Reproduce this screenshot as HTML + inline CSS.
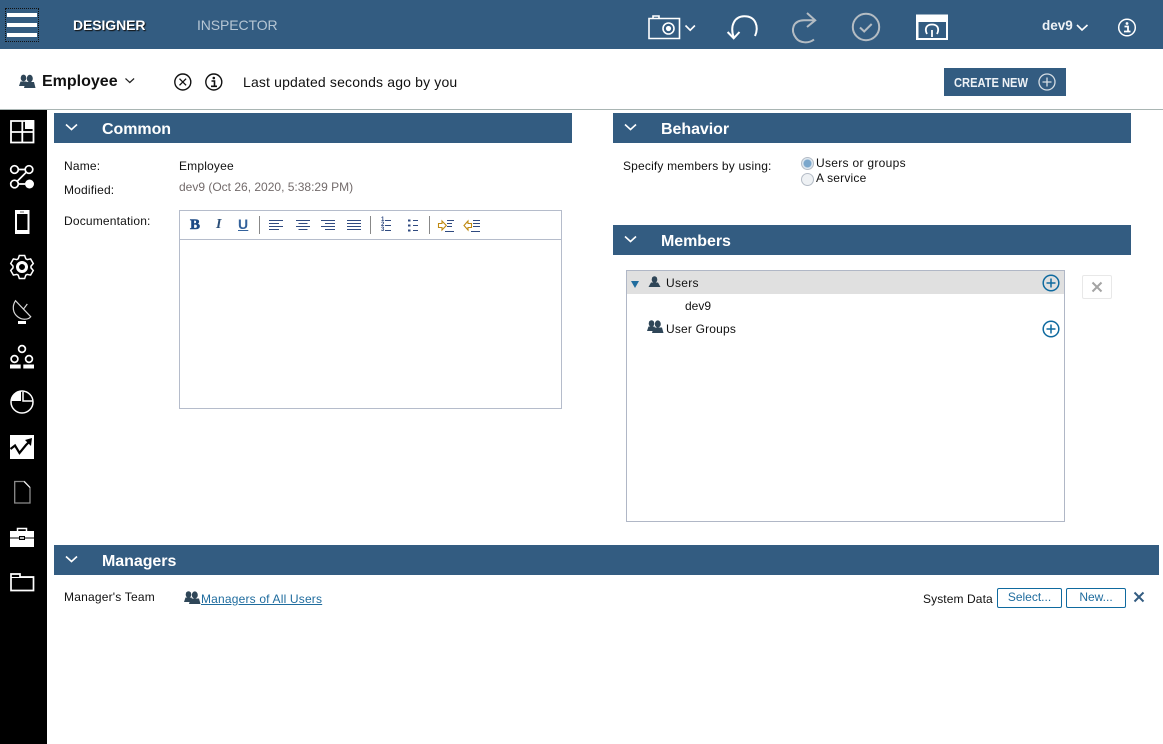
<!DOCTYPE html>
<html><head><meta charset="utf-8">
<style>
html,body{margin:0;padding:0;background:#fff}
body{width:1163px;height:744px;position:relative;overflow:hidden;font-family:"Liberation Sans",sans-serif;font-size:12px;color:#111}
.a{position:absolute}
.t{position:absolute;white-space:nowrap;line-height:16px;letter-spacing:.18px}
.bar{position:absolute;background:#335c81;height:30px}
.bar b{position:absolute;left:48px;top:7px;font-size:16px;line-height:19px;color:#fff;white-space:nowrap;letter-spacing:-.05px}
.bar svg{position:absolute;left:11px;top:10px}
svg{position:absolute;overflow:visible}
.btn{position:absolute;box-sizing:border-box;border:1px solid #0f6a9f;border-radius:2px;height:20px;color:#1f6c9e;text-align:center;line-height:17px;background:#fff}
</style></head><body>

<div class="a" style="left:0;top:0;width:1163px;height:49px;background:#335c81"></div>
<div class="a" style="left:5px;top:8px;width:34px;height:34px;border:1px dotted #111;box-sizing:border-box"></div>
<div class="a" style="left:7px;top:13px;width:30px;height:4px;background:#fff"></div>
<div class="a" style="left:7px;top:23px;width:30px;height:4px;background:#fff"></div>
<div class="a" style="left:7px;top:33px;width:30px;height:4px;background:#fff"></div>
<div class="t" style="left:73px;top:17px;font-size:14px;font-weight:bold;color:#fff;text-shadow:1px 1px 1px #111;letter-spacing:-.1px">DESIGNER</div>
<div class="t" style="left:197px;top:17px;font-size:14px;color:#b6c6d4;letter-spacing:-.1px">INSPECTOR</div>

<svg style="left:0;top:0" width="1163" height="49" fill="none">
<g stroke="#fff" stroke-width="1.6">
<path d="M649 18.500H679.500V38.500H649Z"/><path d="M653 18V16H659V18"/>
<circle cx="668.500" cy="28.500" r="5.500"/><circle cx="668.500" cy="28.500" r="1.800" fill="#fff"/>
<path d="M685.500 25.500l4.700 4.700 4.700-4.700"/>
</g>
<g stroke="#fff" stroke-width="2">
<path d="M755 36C759 27 756 16 744 16.300C735 16.500 729.500 25 733.700 37.500"/>
<path d="M727.600 32L733.700 38.300L739.500 32"/>
</g>
<g stroke="#b4bcc3" stroke-width="2">
<path d="M814 39.500C809 43.500 800 43.500 796 38C790 30 793 20.500 804 20.300L815 20.300"/>
<path d="M807 13L815.200 20.300L807 27"/>
<circle cx="866" cy="27" r="13.200"/>
<path d="M860 27.500l4.200 4 7.500-7.500"/>
</g>
<path d="M916 14.500H948V40H916Z" fill="#fff"/>
<path d="M918.500 22H946V38H918.500Z" fill="#335c81"/>
<path d="M927 34C924 28 927 24.500 932 24.500C937 24.500 940 28 937 34" stroke="#fff" stroke-width="1.800"/>
<path d="M932 30V37" stroke="#fff" stroke-width="1.800"/>
<path d="M1077 25l5 5 5.500-5" stroke="#fff" stroke-width="1.600"/>
<circle cx="1127" cy="27.500" r="8.300" stroke="#fff" stroke-width="1.500"/>
<circle cx="1127" cy="23.500" r="1.400" fill="#fff"/>
<path d="M1124.500 26.500H1128V31.500M1124 31.500H1130.500" stroke="#fff" stroke-width="1.800"/>
</svg>
<div class="t" style="left:1042px;top:18px;font-size:13.500px;font-weight:bold;color:#eef2f6;letter-spacing:0">dev9</div>

<svg style="left:18px;top:74px" width="18" height="14"><g fill="#2f4658"><ellipse cx="5.500" cy="4" rx="2.800" ry="3.400"/><path d="M1 12L2.500 7.500H8.500L10 12Z"/><ellipse cx="11.800" cy="4.500" rx="3" ry="3.800"/><path d="M6 14L7.500 8H16L17.500 14Z"/></g></svg>
<div class="t" style="left:42px;top:72px;font-size:16px;line-height:19px;font-weight:bold;color:#111;letter-spacing:0">Employee</div>
<svg style="left:125px;top:78px" width="10" height="6" fill="none"><path d="M0.500 0.500l4.300 4 4.300-4" stroke="#222" stroke-width="1.200"/></svg>
<svg style="left:174px;top:73px" width="18" height="18" fill="none" stroke="#111"><circle cx="8.800" cy="9" r="8" stroke-width="1.400"/><path d="M5.500 5.700l6.600 6.600M12.100 5.700l-6.600 6.600" stroke-width="1.300"/></svg>
<svg style="left:205px;top:73px" width="18" height="18" fill="none" stroke="#111"><circle cx="8.800" cy="9" r="8" stroke-width="1.400"/><circle cx="8.800" cy="5" r="1.300" fill="#111" stroke="none"/><path d="M6.500 8H9.500V13M6 13.300H12" stroke-width="1.600"/></svg>
<div class="t" style="left:243px;top:74px;font-size:14px;letter-spacing:.16px">Last updated seconds ago by you</div>

<div class="a" style="left:944px;top:68px;width:122px;height:28px;background:#335c81"></div>
<div class="t" style="left:954px;top:75px;font-size:12.500px;font-weight:bold;color:#eef2f6;transform:scaleX(.89);transform-origin:0 0;letter-spacing:0">CREATE NEW</div>
<svg style="left:1038px;top:73px" width="18" height="18" fill="none" stroke="#d5dde4"><circle cx="9" cy="9" r="8" stroke-width="1.300"/><path d="M4.500 9H13.500M9 4.500V13.500" stroke-width="1.300"/></svg>
<div class="a" style="left:0;top:109px;width:1163px;height:1px;background:#a9b5b3"></div>

<div class="a" style="left:0;top:110px;width:47px;height:634px;background:#000"></div>
<svg style="left:0;top:110px" width="47" height="500" fill="none">
<g transform="translate(0,-110)">
<g stroke="#fff" stroke-width="1.800">
<path d="M11 121H33.500V142.500H11ZM22.300 121V142.500M11 132H33.500"/>
</g>
<rect x="25" y="120" width="9" height="9" fill="#fff"/>
<g stroke="#fff" stroke-width="1.700">
<circle cx="14.500" cy="169.500" r="3.800"/><circle cx="29" cy="169.500" r="3.800"/><circle cx="14.500" cy="184" r="3.800"/>
<path d="M18.300 169.500H25.200M18.300 184H25.200M17 181.500L26.500 172"/>
</g>
<circle cx="29.500" cy="184" r="4.500" fill="#fff"/>
<rect x="15" y="210" width="14.500" height="24" fill="#fff"/>
<rect x="17" y="214" width="10.500" height="16" fill="#000"/>
<rect x="20" y="211.500" width="4" height="1" fill="#666"/>
<path d="M19.350 255.500L24.650 255.500 25.800 258.800 27.160 259.600 30.630 258.950 33.280 263.550 30.970 266.200V267.800L33.280 270.450 30.630 275.050 27.160 274.400 25.800 275.160 24.650 278.500H19.350L18.200 275.160 16.840 274.400 13.370 275.050 10.720 270.450 13.030 267.800V266.200L10.720 263.550 13.370 258.950 16.840 259.600 18.200 258.800Z" stroke="#fff" stroke-width="1.500"/>
<circle cx="22" cy="267" r="4.500" stroke="#fff" stroke-width="3"/>
<g stroke="#d8d8d8" stroke-width="1.200">
<path d="M15.500 300.700C12 306 12.500 313 18 317C22 320 28 320 30.700 316.700Z"/>
<path d="M23.300 309.300L27.300 304"/>
</g>
<rect x="18" y="321" width="8" height="3" fill="#fff"/>
<g stroke="#fff" stroke-width="1.700">
<circle cx="22" cy="349" r="3.400"/><circle cx="14.500" cy="359" r="3.400"/><circle cx="29" cy="359" r="3.400"/>
</g>
<rect x="10" y="364.500" width="10.700" height="4" fill="#fff"/><rect x="23.300" y="364.500" width="10.700" height="4" fill="#fff"/>
<circle cx="22" cy="402" r="11" stroke="#fff" stroke-width="1.500"/>
<path d="M21 391V401H11C11 395 15 391.500 21 391Z" fill="#fff"/>
<path d="M23 392V401H33" stroke="#fff" stroke-width="1.500"/>
<rect x="10" y="435" width="24" height="24" fill="#fff"/>
<path d="M10.500 449L15 445.500 19.500 453 26 445 29.500 441.500" stroke="#000" stroke-width="2.200"/>
<path d="M25 440L32 438 31 446Z" fill="#000"/>
<path d="M14.700 481.500H24.500L30 487.500V503H14.700Z" stroke="#8c8c8c" stroke-width="1.300"/>
<path d="M24 481.500L30 487.500" stroke="#fff"/>
<path d="M10 531H34V537.500H10ZM10 538.500H34V547H10Z" fill="#fff"/>
<path d="M17.500 531V528.500H26.500V531" stroke="#fff" stroke-width="1.500"/>
<rect x="19" y="536" width="6" height="4" fill="#000"/><rect x="20" y="537" width="4" height="2" fill="#bbb"/>
<path d="M11 590.500V574H20V577H33.500V590.500Z" stroke="#fff" stroke-width="1.700"/>
<path d="M11 577.500H33" stroke="#fff" stroke-width="1"/>
</g></svg>

<div class="bar" style="left:54px;top:113px;width:518px"><b>Common</b><svg width="14" height="9" fill="none"><path d="M1 1.500l5.500 5 5.500-5" stroke="#fff" stroke-width="1.600"/></svg></div>
<div class="bar" style="left:613px;top:113px;width:518px"><b>Behavior</b><svg width="14" height="9" fill="none"><path d="M1 1.500l5.500 5 5.500-5" stroke="#fff" stroke-width="1.600"/></svg></div>
<div class="bar" style="left:613px;top:225px;width:518px"><b>Members</b><svg width="14" height="9" fill="none"><path d="M1 1.500l5.500 5 5.500-5" stroke="#fff" stroke-width="1.600"/></svg></div>
<div class="bar" style="left:54px;top:545px;width:1105px"><b>Managers</b><svg width="14" height="9" fill="none"><path d="M1 1.500l5.500 5 5.500-5" stroke="#fff" stroke-width="1.600"/></svg></div>

<div class="t" style="left:64px;top:158px">Name:</div>
<div class="t" style="left:179px;top:158px">Employee</div>
<div class="t" style="left:64px;top:182px">Modified:</div>
<div class="t" style="left:179px;top:179px;color:#736b6b;letter-spacing:0">dev9 (Oct 26, 2020, 5:38:29 PM)</div>
<div class="t" style="left:64px;top:213px">Documentation:</div>

<div class="a" style="left:179px;top:210px;width:383px;height:199px;box-sizing:border-box;border:1px solid #b5bccb"></div>
<div class="a" style="left:180px;top:239px;width:381px;height:1px;background:#b5bccb"></div>
<div class="t" style="left:190px;top:217px;font:bold 15px/16px 'Liberation Serif',serif;color:#1d4a85;-webkit-text-stroke:.6px #1d4a85">B</div>
<div class="t" style="left:216px;top:217px;font:italic bold 14px/16px 'Liberation Serif',serif;color:#2b4e78">I</div>
<div class="t" style="left:238px;top:217px;font:bold 14px/15px 'Liberation Sans',sans-serif;color:#33619b;text-decoration:underline">U</div>
<svg style="left:0;top:0" width="600" height="240" fill="none">
<g stroke="#888" stroke-width="1"><path d="M259.500 216V234M370.500 216V234M429.500 216V234"/></g>
<g stroke="#2f4a80" stroke-width="1">
<path d="M269 220.500H283M269 223.500H279M269 226.500H283M269 229.500H279"/>
<path d="M296 220.500H310M298.500 223.500H307.500M296 226.500H310M298.500 229.500H307.500"/>
<path d="M321 220.500H335M325 223.500H335M321 226.500H335M325 229.500H335"/>
<path d="M347 220.500H361M347 223.500H361M347 226.500H361M347 229.500H361"/>
<path d="M385 220.500H391M385 225.500H391M385 230.500H391"/>
<path d="M413 220.500H418M413 225.500H418M413 230.500H418"/>
<path d="M408 219.500H410.500V221.500H408ZM408 224.500H410.500V226.500H408ZM408 229.500H410.500V231.500H408Z" fill="#2f4a80" stroke="none"/>
<path d="M447 220.500H454M447 223.500H452M447 226.500H452M445 231.500H454"/>
<path d="M473 220.500H480M473 223.500H480M473 226.500H480M471 231.500H480"/>
</g>
<path d="M438.500 223.500H442V221L446.300 225.500 442 230V227.500H438.500Z" stroke="#c08a12" stroke-width="1.100" fill="#fff"/>
<path d="M471.500 223.500H468V221L464 225.500 468 230V227.500H471.500Z" stroke="#c08a12" stroke-width="1.100" fill="#fff"/>
</svg>
<div class="t" style="left:381px;top:218px;font-size:6px;line-height:5px;color:#2f4a80;font-weight:bold;letter-spacing:0">1<br>2<br>3</div>

<div class="t" style="left:623px;top:158px">Specify members by using:</div>
<div class="a" style="left:801px;top:157px;width:13px;height:13px;box-sizing:border-box;border-radius:50%;border:1px solid #b4bcc6;background:radial-gradient(circle,#7ba7cc 0 3.500px,#dfe8f0 4.500px)"></div>
<div class="a" style="left:801px;top:173px;width:13px;height:13px;box-sizing:border-box;border-radius:50%;border:1px solid #b4bcc6;background:#eef1f4"></div>
<div class="t" style="left:816px;top:155px;letter-spacing:.3px">Users or groups</div>
<div class="t" style="left:816px;top:170px;letter-spacing:.2px">A service</div>

<div class="a" style="left:626px;top:270px;width:439px;height:252px;box-sizing:border-box;border:1px solid #b0b7c6"></div>
<div class="a" style="left:627px;top:271px;width:437px;height:23px;background:#e0e0e0"></div>
<svg style="left:631px;top:281px" width="8" height="7"><path d="M0 0H8L4 7Z" fill="#1f6c9e"/></svg>
<svg style="left:648px;top:276px" width="13" height="13"><g fill="#2f4658"><ellipse cx="6.500" cy="3.500" rx="2.800" ry="3.300"/><path d="M0.500 11L3 6.500H10L12.500 11Z"/></g></svg>
<div class="t" style="left:666px;top:275px;letter-spacing:.3px">Users</div>
<div class="t" style="left:685px;top:298px;letter-spacing:0">dev9</div>
<svg style="left:646px;top:320px" width="18" height="14"><g fill="#2f4658"><ellipse cx="5.500" cy="3.500" rx="2.800" ry="3.300"/><path d="M1 11L2.500 6.500H8.500L10 11Z"/><ellipse cx="11.800" cy="4" rx="3" ry="3.600"/><path d="M6 13L7.500 7.500H16L17.500 13Z"/></g></svg>
<div class="t" style="left:666px;top:321px">User Groups</div>
<svg style="left:1042px;top:274px" width="18" height="64" fill="none" stroke="#0f6a9f"><circle cx="9" cy="9" r="7.800" stroke-width="1.500"/><path d="M4.500 9H13.500M9 4.500V13.500" stroke-width="1.500"/><circle cx="9" cy="55" r="7.800" stroke-width="1.500"/><path d="M4.500 55H13.500M9 50.500V59.500" stroke-width="1.500"/></svg>
<div class="a" style="left:1082px;top:275px;width:30px;height:24px;box-sizing:border-box;border:1px solid #e8e8e8;border-radius:2px"></div>
<svg style="left:1092px;top:282px" width="10" height="10" fill="none"><path d="M0.500 0.500l9 9M9.500 0.500l-9 9" stroke="#a4a4a4" stroke-width="2"/></svg>

<div class="t" style="left:64px;top:589px;letter-spacing:.2px">Manager's Team</div>
<svg style="left:183px;top:591px" width="18" height="14"><g fill="#2f4658"><ellipse cx="5.500" cy="3.500" rx="2.800" ry="3.300"/><path d="M1 11L2.500 6.500H8.500L10 11Z"/><ellipse cx="11.800" cy="4" rx="3" ry="3.600"/><path d="M6 13L7.500 7.500H16L17.500 13Z"/></g></svg>
<div class="t" style="left:201px;top:591px;color:#1f6c9e;text-decoration:underline">Managers of All Users</div>
<div class="t" style="left:923px;top:591px;letter-spacing:.1px">System Data</div>
<div class="btn" style="left:997px;top:588px;width:65px">Select...</div>
<div class="btn" style="left:1066px;top:588px;width:60px">New...</div>
<svg style="left:1134px;top:592px" width="10" height="10" fill="none"><path d="M0.500 0.500l9 9M9.500 0.500l-9 9" stroke="#335c81" stroke-width="2"/></svg>
</body></html>
